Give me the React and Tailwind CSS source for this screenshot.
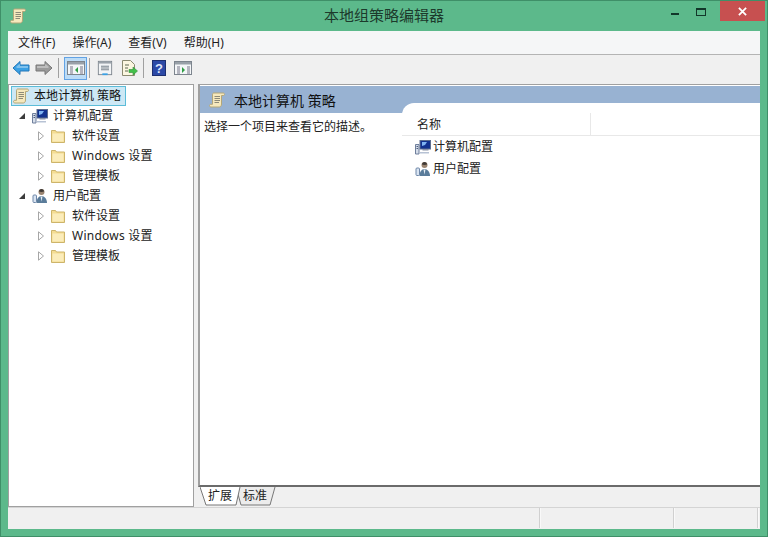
import React from "react";

const FONT = "font-['Noto_Sans','Noto_Sans_CJK_SC',sans-serif]";

function Scroll({ className = "w-4 h-4" }) {
  return (
    <svg viewBox="0 0 16 16" className={className}>
      <path d="M4.500 1h9.500c1 0 1.500.6 1.500 1.300S15 3.500 14 3.500h-1.500v8.500c0 1.700-.8 3-2.200 3H2c-1 0-1.500-.7-1.500-1.400S1 12.300 2 12.300h1.500V3c0-1.200.2-1.700 1-2z" fill="#f6e9bd" stroke="#b3a679" strokeWidth="1" />
      <path d="M5.500 4.500h5.500M5.500 6.500h5.500M5.500 8.500h5.500M5.500 10.500h4.500" stroke="#8d8a78" strokeWidth="1" />
    </svg>
  );
}

function Computer() {
  return (
    <svg viewBox="0 0 16 16" className="w-4 h-4">
      <rect x="5" y="1.500" width="10.500" height="8.500" fill="#12328f" stroke="#5c6d8f" />
      <path d="M7 3h5l-2 3-3 1z" fill="#7fb4f2" />
      <rect x="7.500" y="10" width="6" height="1.500" fill="#8a93a6" />
      <path d="M.5 5.500h3.500v9.500H.5z" fill="#d6deea" stroke="#6f7f9c" />
      <path d="M1.500 7.500h1.500M1.500 9.500h1.500" stroke="#4c5c7c" />
      <path d="M5 13h9v1.500H5z" fill="#b7c2d4" />
    </svg>
  );
}

function User() {
  return (
    <svg viewBox="0 0 16 16" className="w-4 h-4">
      <rect x="1" y="7" width="3.500" height="7.500" rx="1" fill="#d9e4f2" stroke="#6f87a8" />
      <circle cx="9.500" cy="4" r="3" fill="#9a8470" />
      <path d="M7 3.500c1 .5 4 .5 5 0 0-1.500-1.200-2.500-2.500-2.500S7 2 7 3.500z" fill="#3f3a36" />
      <path d="M4.500 15c0-4 2-7 5-7s5.500 3 5.500 7z" fill="#5a7c9a" />
      <path d="M8.500 8.500h2l-1 5z" fill="#e6edf5" />
    </svg>
  );
}

function Folder() {
  return (
    <svg viewBox="0 0 14 14" className="w-[14px] h-[14px]">
      <path d="M.5 1.500h4l1 1.500h8v10.500H.5z" fill="#f4dc92" stroke="#cdb46a" />
      <path d="M1.500 4.500h11v8h-11z" fill="#fbecba" />
    </svg>
  );
}

function Expander({ open }) {
  if (open) {
    return (
      <svg viewBox="0 0 8 8" className="w-2 h-2">
        <path d="M7 1v6H1z" fill="#3c3c3c" />
      </svg>
    );
  }
  return (
    <svg viewBox="0 0 8 10" className="w-2 h-[10px]">
      <path d="M1.500 .8l5 4.200-5 4.200z" fill="#fff" stroke="#a6a6a6" />
    </svg>
  );
}

function Arrow({ left, fill, stroke }) {
  return (
    <svg viewBox="0 0 18 16" className={"w-[18px] h-4 " + (left ? "" : "-scale-x-100")}>
      <path d="M1 8l7-6.500V5h9v6H8v3.500z" fill={fill} stroke={stroke} strokeLinejoin="round" />
      <path d="M4 7l4-3.500V6h8v2H5z" fill="#ffffff" opacity="0.35" />
    </svg>
  );
}

function PaneIcon({ active }) {
  return (
    <svg viewBox="0 0 18 16" className="w-[18px] h-4">
      <rect x=".5" y="1.500" width="17" height="13" fill="#f4f6f8" stroke="#7d858e" />
      <rect x="1" y="2" width="16" height="2.500" fill="#98a0a8" />
      <path d="M3 7h3M3 9h3M3 11h3M3 13h3" stroke="#778" />
      <path d={active ? "M11 7v6l-3-3z" : "M8 7v6l3-3z"} fill="#2f9e44" />
      <path d="M13 7h3M13 9h3M13 11h3M13 13h3" stroke="#778" />
    </svg>
  );
}

function Group({ icon, label }) {
  const kids = ["软件设置", "Windows 设置", "管理模板"];
  return (
    <>
      <div className="flex items-center h-5 pl-[7px]">
        <span className="w-[10px] flex justify-center shrink-0"><Expander open /></span>
        <span className="ml-[5px]">{icon}</span>
        <span className="ml-[5px] text-[12px] text-[#222]">{label}</span>
      </div>
      {kids.map(k => (
        <div key={k} className="flex items-center h-5 pl-[26px]">
          <span className="w-[10px] flex justify-center shrink-0"><Expander /></span>
          <span className="ml-[5px]"><Folder /></span>
          <span className={"ml-[7px] text-[12px] text-[#222] " + (k.startsWith("W") ? "tracking-[0.25px]" : "")}>{k}</span>
        </div>
      ))}
    </>
  );
}

export default function App() {
  return (
    <div className={"w-[768px] h-[537px] bg-[#5cb98b] border border-[#3f8f68] flex flex-col overflow-hidden " + FONT}>
      <div className="h-[30px] grid grid-cols-[1fr_auto_1fr] shrink-0">
        <div className="pl-[9px] pt-[7px]"><Scroll /></div>
        <span className="text-[15px] leading-[28px] text-[#1c3a2c]">本地组策略编辑器</span>
        <div className="flex items-start justify-end mr-[1px]">
          <div className="w-[34px] h-[20px] relative">
            <div className="absolute left-[11px] top-[12px] w-[8px] h-[2px] bg-[#12372a]" />
          </div>
          <div className="w-[26px] h-[20px] relative">
            <div className="absolute left-[2px] top-[7px] w-[10px] h-[8px] border border-[#12372a] border-t-2" />
          </div>
          <div className="w-[45px] h-[20px] bg-[#c75050] flex items-center justify-center mr-[1px]">
            <svg viewBox="0 0 10 10" className="w-[9px] h-[9px]">
              <path d="M1 1l8 8M9 1l-8 8" stroke="#fff" strokeWidth="2" />
            </svg>
          </div>
        </div>
      </div>

      <div className="mx-[7px] flex-1 flex flex-col bg-[#f0f0f0] min-h-0">
        <div className="h-[23px] bg-[#f5f6f7] border-b border-[#b4b4b4] flex items-center pl-[10px] gap-[17px] text-[12px] text-[#1e1e1e] box-content shrink-0">
          <span>文件(F)</span>
          <span>操作(A)</span>
          <span>查看(V)</span>
          <span>帮助(H)</span>
        </div>

        <div className="h-[29px] flex items-center pl-[4px] pb-[3px] shrink-0">
          <Arrow left fill="#3aa0e4" stroke="#2277b8" />
          <span className="ml-[5px]"><Arrow fill="#9a9a9a" stroke="#777" /></span>
          <div className="w-px h-[20px] bg-[#a0a0a0] ml-[5px]" />
          <div className="ml-[5px] w-[23px] h-[23px] bg-[#bcdcf6] border border-[#62a2e4] flex items-center justify-center">
            <PaneIcon active />
          </div>
          <div className="w-px h-[20px] bg-[#a0a0a0] ml-[2px]" />
          <span className="ml-[7px]">
            <svg viewBox="0 0 18 18" className="w-4 h-4">
              <rect x="1.500" y="1.500" width="15" height="15" fill="#f2f4f6" stroke="#7c848c" />
              <rect x="2" y="2" width="14" height="2" fill="#9aa2aa" />
              <path d="M4.500 7h9M4.500 9h9M4.500 11h9" stroke="#6a7580" />
              <path d="M6 16h6" stroke="#3aa0e4" strokeWidth="2" />
            </svg>
          </span>
          <span className="ml-[7px]">
            <svg viewBox="0 0 18 18" className="w-[18px] h-[18px]">
              <path d="M2.500 1.500h8l4 4v11h-12z" fill="#fbf6e0" stroke="#8b8a70" />
              <path d="M5 6h4M5 9h3M5 12h3" stroke="#5d6650" />
              <path d="M9 10.500h4V8l4.500 4-4.500 4v-2.500H9z" fill="#43c04a" stroke="#2f8f38" strokeWidth=".6" />
            </svg>
          </span>
          <div className="w-px h-[20px] bg-[#a0a0a0] ml-[5px]" />
          <span className="ml-[8px]">
            <svg viewBox="0 0 14 16" className="w-[14px] h-4">
              <rect x=".5" y=".5" width="13" height="15" fill="#2c49a6" stroke="#1d2f70" />
              <text x="7" y="13" textAnchor="middle" fontSize="13" fontWeight="700" fill="#dfe6fb" fontFamily="Liberation Sans">?</text>
            </svg>
          </span>
          <span className="ml-[8px]"><PaneIcon /></span>
        </div>

        <div className="flex-1 flex min-h-0">
          <div className="w-[186px] bg-white border border-[#a0a0a0] pt-px pl-[1px] shrink-0">
            <div className="flex items-center h-5 w-[115px] ml-px bg-[#cde8f5] border border-[#5bbcd8] pl-px">
              <Scroll />
              <span className="ml-[5px] text-[12px] text-[#111] whitespace-nowrap">本地计算机 策略</span>
            </div>
            <div>
              <Group icon={<Computer />} label="计算机配置" />
              <Group icon={<User />} label="用户配置" />
            </div>
          </div>

          <div className="flex-1 ml-[4px] flex flex-col min-w-0">
            <div className="flex-1 bg-white border-l-2 border-t border-[#a0a0a0] border-b-2 border-b-[#6b6b6b] flex flex-col min-h-0">
              <div className="h-[27px] bg-[#98b2d2] flex items-center pl-[9px] pt-px shrink-0 mt-px">
                <Scroll className="w-[16px] h-[16px]" />
                <span className="ml-[9px] text-[14px] text-[#111]">本地计算机 策略</span>
              </div>
              <div className="flex flex-1 min-h-0">
                <div className="w-[202px] pl-[4px] pt-[5px] text-[12px] text-[#222] shrink-0">选择一个项目来查看它的描述。</div>
                <div className="flex-1 bg-white rounded-tl-[12px] -mt-[10px]">
                  <div className="h-[33px] border-b border-[#e8e8e8] pt-[10px] flex">
                    <div className="w-[189px] h-[23px] border-r border-[#e8e8e8] pl-[15px] text-[12px] text-[#222] flex items-center">名称</div>
                  </div>
                  <div className="pl-[13px]">
                    <div className="flex items-center h-[22px] text-[12px] text-[#222] gap-[2px]"><Computer />计算机配置</div>
                    <div className="flex items-center h-[22px] text-[12px] text-[#222] gap-[2px]"><User />用户配置</div>
                  </div>
                </div>
              </div>
            </div>
            <div className="h-[20px] flex items-start pl-[2px] text-[12px] text-[#222] shrink-0">
              <div className="relative w-[76px] h-[20px]">
                <svg viewBox="0 0 76 20" className="absolute inset-0 w-[76px] h-[20px]">
                  <path d="M36 0l5 18h29l5-18" fill="#ececec" stroke="#777" />
                  <path d="M0 0l6 18h30l4-18" fill="#fff" stroke="#777" />
                </svg>
                <span className="absolute left-[8px] top-0">扩展</span>
                <span className="absolute left-[43px] top-0">标准</span>
              </div>
            </div>
          </div>
        </div>

        <div className="h-[22px] border-t border-[#d4d4d4] flex shrink-0 bg-[#f0f0f0]">
          <div className="flex-1" />
          <div className="w-[2px] h-[20px] border-l border-[#d0d0d0] bg-white/60" />
          <div className="w-[132px]" />
          <div className="w-[2px] h-[20px] border-l border-[#d0d0d0] bg-white/60" />
          <div className="w-[82px]" />
          <div className="w-[2px] h-[20px] border-l border-[#d0d0d0] bg-white/60" />
          <div className="w-[1px]" />
        </div>
      </div>
      <div className="h-[7px] shrink-0" />
    </div>
  );
}
